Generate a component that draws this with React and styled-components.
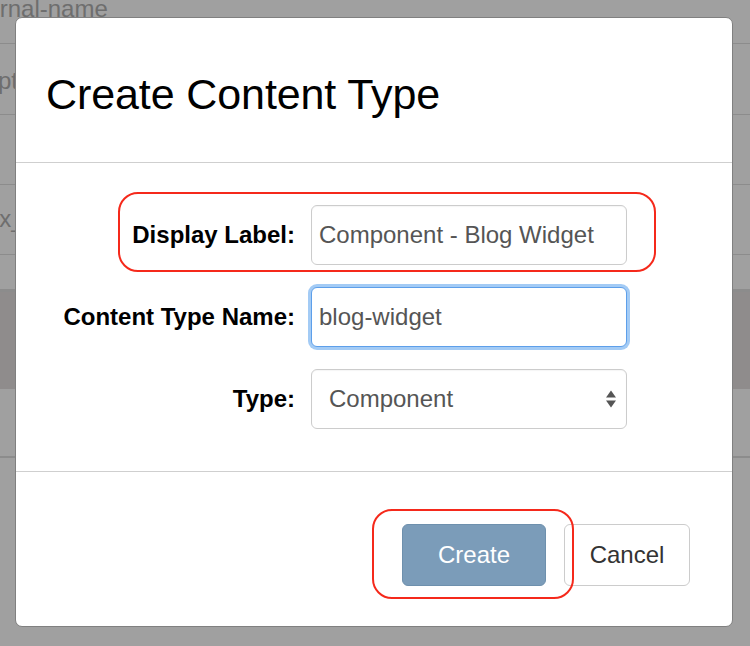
import React from "react";
import styled, { createGlobalStyle } from "styled-components";

const Global = createGlobalStyle`
  html, body { margin: 0; padding: 0; }
  body {
    background: #a0a0a0;
    font-family: "Liberation Sans", Arial, Helvetica, sans-serif;
    overflow: hidden;
  }
`;

const Screen = styled.div`
  position: relative;
  width: 750px;
  height: 646px;
  overflow: hidden;
  background: #a0a0a0;
`;

const PageBehind = styled.div`
  display: flex;
  flex-direction: column;
`;

const BgRow = styled.div`
  height: ${(p) => p.$h}px;
  border-bottom: ${(p) => p.$line || 0}px solid #8c8c8c;
  background: ${(p) => (p.$dark ? "#8f8c8c" : "transparent")};
  overflow: hidden;
  white-space: nowrap;
`;

const BgText = styled.div`
  font-size: 24px;
  line-height: 1;
  color: #6e6e6e;
  margin-left: ${(p) => p.$indent}px;
  margin-top: ${(p) => p.$top}px;
`;

const Modal = styled.div`
  position: absolute;
  left: 15px;
  top: 17px;
  width: 716px;
  height: 608px;
  background: #fff;
  border: 1px solid #808080;
  border-radius: 7px;
  display: flex;
  flex-direction: column;
`;

const Header = styled.div`
  height: 136px;
  padding: 8px 0 0 30px;
  display: flex;
  align-items: center;
  border-bottom: 1px solid #cfcfcf;
`;

const Title = styled.h1`
  margin: 0;
  font-size: 43px;
  font-weight: normal;
  color: #000;
  letter-spacing: -0.1px;
`;

const Body = styled.div`
  padding: 42px 0 42px 0;
  display: flex;
  flex-direction: column;
  gap: 22px;
  border-bottom: 1px solid #cfcfcf;
`;

const Row = styled.div`
  position: relative;
  display: flex;
  align-items: center;
  gap: 16px;
`;

const Label = styled.label`
  width: 279px;
  text-align: right;
  font-size: 24px;
  font-weight: bold;
  color: #000;
  position: relative;
  z-index: 1;
`;

const Field = styled.div`
  position: relative;
  z-index: 1;
  box-sizing: border-box;
  width: 316px;
  height: 60px;
  display: flex;
  align-items: center;
  padding: ${(p) => (p.$select ? "0 9px 0 17px" : "0 0 0 7px")};
  border: 1px solid ${(p) => (p.$focused ? "#5d9fea" : "#cccccc")};
  border-radius: 6px;
  background: #fff;
  font-size: 24px;
  color: #555;
  box-shadow: ${(p) =>
    p.$focused ? "0 0 0 3px #a3cbf5" : "inset 0 1px 1px rgba(0,0,0,0.04)"};
`;

const Value = styled.span`
  flex: 1;
`;

const Highlight = styled.div`
  position: absolute;
  left: ${(p) => p.$l}px;
  top: ${(p) => p.$t}px;
  width: ${(p) => p.$w}px;
  height: ${(p) => p.$h}px;
  border: 2px solid #f5291b;
  border-radius: 20px;
  box-sizing: border-box;
  pointer-events: none;
  z-index: 3;
`;

const Footer = styled.div`
  flex: 1;
  display: flex;
  justify-content: flex-end;
  align-items: flex-start;
  padding: 52px 42px 0 0;
  gap: 18px;
`;

const ButtonWrap = styled.div`
  position: relative;
`;

const Button = styled.button`
  box-sizing: border-box;
  height: 62px;
  width: ${(p) => p.$w}px;
  border-radius: 6px;
  font-family: "Liberation Sans", Arial, sans-serif;
  font-size: 24px;
  cursor: pointer;
  border: 1px solid ${(p) => (p.$primary ? "#6e90ad" : "#cccccc")};
  background: ${(p) => (p.$primary ? "#7b9cb9" : "#fff")};
  color: ${(p) => (p.$primary ? "#fff" : "#333")};
`;

function Arrows() {
  return (
    <svg width="12" height="20" viewBox="0 0 12 20">
      <path d="M6 1.5 L11 8.5 L1 8.5 Z" fill="#555" />
      <path d="M6 18.5 L11 11.5 L1 11.5 Z" fill="#555" />
    </svg>
  );
}

export default function App() {
  return (
    <Screen>
      <Global />
      <PageBehind>
        <BgRow $h={43} $line={1}>
          <BgText $indent={-39} $top={-3}>internal-name</BgText>
        </BgRow>
        <BgRow $h={70} $line={1}>
          <BgText $indent={-70} $top={25}>Descript</BgText>
        </BgRow>
        <BgRow $h={69} $line={1} />
        <BgRow $h={69} $line={1}>
          <BgText $indent={-14} $top={22}>ex_</BgText>
        </BgRow>
        <BgRow $h={34} $line={3} />
        <BgRow $h={97} $dark />
        <BgRow $h={67} $line={2} />
        <BgRow $h={180} />
      </PageBehind>

      <Modal>
        <Header>
          <Title>Create Content Type</Title>
        </Header>
        <Body>
          <Row>
            <Highlight $l={102} $t={-13} $w={538} $h={80} />
            <Label>Display Label:</Label>
            <Field>
              <Value>Component - Blog Widget</Value>
            </Field>
          </Row>
          <Row>
            <Label>Content Type Name:</Label>
            <Field $focused>
              <Value>blog-widget</Value>
            </Field>
          </Row>
          <Row>
            <Label>Type:</Label>
            <Field $select>
              <Value>Component</Value>
              <Arrows />
            </Field>
          </Row>
        </Body>
        <Footer>
          <ButtonWrap>
            <Button $primary $w={144}>Create</Button>
            <Highlight $l={-30} $t={-15} $w={202} $h={90} />
          </ButtonWrap>
          <Button $w={126}>Cancel</Button>
        </Footer>
      </Modal>
    </Screen>
  );
}
